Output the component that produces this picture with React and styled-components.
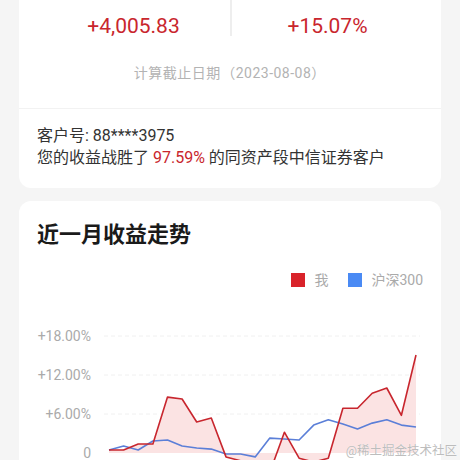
import React from "react";
import styled, { createGlobalStyle } from "styled-components";

const Global = createGlobalStyle`
  html, body { margin: 0; padding: 0; height: 460px; overflow: hidden; background: #f5f5f5; }
  body { font-family: Roboto, "Noto Sans CJK SC", sans-serif; }
`;

const Page = styled.div`
  position: relative;
  height: 460px;
  overflow: hidden;
  padding: 0 19px;
  box-sizing: border-box;
  display: flex;
  flex-direction: column;
  gap: 13px;
`;

const Card = styled.section`
  background: #fff;
  border-radius: ${(p) => (p.$cut ? "0 0 12px 12px" : "12px")};
  flex-shrink: 0;
`;

const StatsRow = styled.div`
  display: grid;
  grid-template-columns: 1fr 1fr;
  padding: 0 18px;
`;

const Stat = styled.div`
  height: 36px;
  box-sizing: border-box;
  padding-top: 14px;
  text-align: center;
  font-size: 21px;
  line-height: 24px;
  color: #c9262d;
  border-left: ${(p) => (p.$divider ? "2px solid #eeeeee" : "none")};
`;

const DateLine = styled.div`
  margin-top: 26px;
  text-align: center;
  font-size: 14px;
  line-height: 20px;
  letter-spacing: 0.5px;
  color: #b3b3b3;
  text-spacing-trim: space-all;
`;

const Paren = styled.span`
  display: inline-block;
  width: 15px;
  font-family: "Noto Sans CJK SC", sans-serif;
  text-align: ${(p) => (p.$open ? "right" : "left")};
`;

const Rule = styled.div`
  margin-top: 25px;
  height: 1px;
  background: #f2f2f2;
`;

const Info = styled.div`
  padding: 16px 18px 19px;
  font-size: 16px;
  line-height: 22px;
  color: #333;
`;

const Red = styled.span`
  color: #c9262d;
`;

const Title = styled.h2`
  margin: 0;
  padding: 19px 18px 0;
  font-size: 22px;
  line-height: 30px;
  font-weight: 700;
  color: #1a1a1a;
`;

const Legend = styled.div`
  display: flex;
  justify-content: flex-end;
  align-items: center;
  gap: 20px;
  margin-top: 20px;
  padding-right: 18px;
  font-size: 14px;
  line-height: 20px;
  color: #aaaaaa;
`;

const LegendItem = styled.div`
  display: flex;
  align-items: center;
  gap: 9px;
`;

const Swatch = styled.span`
  width: 14px;
  height: 14px;
  background: ${(p) => p.$color};
`;

const ChartSvg = styled.svg`
  display: block;
  margin-top: 1px;
`;

const Watermark = styled.div`
  position: absolute;
  right: 3px;
  bottom: 1px;
  font-size: 12.5px;
  line-height: 16px;
  color: #bdbdbd;
  text-shadow: 0 0 1px #fff;
`;

const mine = [0.46, 0.46, 1.38, 1.38, 8.6, 8.3, 4.77, 5.38, -0.6, -1.2, -2.2, -3.0, 3.2, -0.8, -1.4, -0.8, 6.9, 6.9, 9.2, 10.0, 5.8, 15.07];
const hs300 = [0.46, 1.08, 0.46, 1.85, 2.0, 1.08, 0.77, 0.6, -0.15, -0.15, -0.6, 2.3, 2.15, 2.0, 4.3, 5.1, 4.46, 3.7, 4.6, 5.1, 4.3, 4.0];

const X0 = 90;
const DX = 14.62;
const Y0 = 162;
const K = 6.5;
const px = (i) => X0 + i * DX;
const py = (v) => Y0 - v * K;
const line = (arr) => arr.map((v, i) => `${i ? "L" : "M"}${px(i).toFixed(1)} ${py(v).toFixed(1)}`).join(" ");
const area = (arr) => `${line(arr)} L${px(arr.length - 1).toFixed(1)} ${Y0} L${px(0)} ${Y0} Z`;

const ticks = [
  { label: "+18.00%", v: 18 },
  { label: "+12.00%", v: 12 },
  { label: "+6.00%", v: 6 },
  { label: "0", v: 0 },
];

function Chart() {
  return (
    <ChartSvg width="422" height="190" viewBox="0 0 422 190">
      {ticks.map((t) => (
        <g key={t.label}>
          {t.v !== 0 && (
            <line x1="85" x2="401" y1={py(t.v)} y2={py(t.v)} stroke="#f0f0f0" strokeWidth="1" strokeDasharray="4 3" />
          )}
          <text x="72" y={py(t.v) + 5} textAnchor="end" fontSize="14" fill="#aaaaaa" fontFamily="Roboto, sans-serif">
            {t.label}
          </text>
        </g>
      ))}
      <path d={area(mine)} fill="#fbe3e3" />
      <path d={line(hs300)} fill="none" stroke="#5b7fd8" strokeWidth="1.6" strokeLinejoin="round" />
      <path d={line(mine)} fill="none" stroke="#c8262e" strokeWidth="1.6" strokeLinejoin="round" />
    </ChartSvg>
  );
}

export default function App() {
  return (
    <>
      <Global />
      <Page>
        <Card $cut>
          <StatsRow>
            <Stat>+4,005.83</Stat>
            <Stat $divider>+15.07%</Stat>
          </StatsRow>
          <DateLine>
            计算截止日期<Paren $open>（</Paren>2023-08-08<Paren>）</Paren>
          </DateLine>
          <Rule />
          <Info>
            <div>客户号: 88****3975</div>
            <div>
              您的收益战胜了 <Red>97.59%</Red> 的同资产段中信证券客户
            </div>
          </Info>
        </Card>
        <Card>
          <Title>近一月收益走势</Title>
          <Legend>
            <LegendItem>
              <Swatch $color="#d9232a" />
              我
            </LegendItem>
            <LegendItem>
              <Swatch $color="#4a8af4" />
              沪深300
            </LegendItem>
          </Legend>
          <Chart />
        </Card>
        <Watermark>@稀土掘金技术社区</Watermark>
      </Page>
    </>
  );
}
